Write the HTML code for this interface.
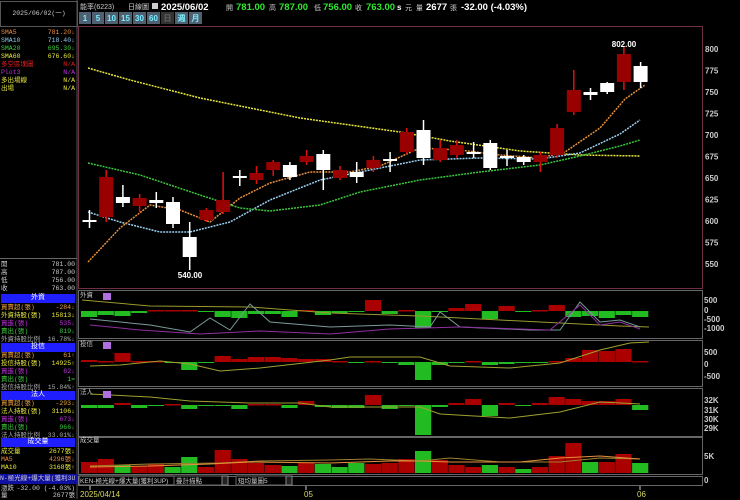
<!DOCTYPE html><html><head><meta charset="utf-8"><style>
body{margin:0;background:#000;width:740px;height:499px;overflow:hidden;font-family:"Liberation Mono","WenQuanYi Zen Hei",monospace;font-size:8px;color:#ccc}
#l{position:absolute;left:0;top:0;width:77px;height:499px}
.r{position:absolute;left:1px;width:75px;height:9px;line-height:9px;font-size:6.5px;white-space:nowrap;overflow:hidden}
.r span{position:absolute;right:1px;top:0}
.hd{position:absolute;left:1px;width:74px;height:9px;background:#1e1eff;color:#fff;text-align:center;line-height:9px;font-size:7px}
</style></head><body>
<svg width="740" height="499" style="position:absolute;left:0;top:0" id="s" font-family="Liberation Sans, WenQuanYi Zen Hei, sans-serif"></svg>
<div id="l">
<div style="position:absolute;left:0;top:1px;width:76px;height:24px;border:1px solid #555;color:#ccc;font-size:6.5px;line-height:24px;text-align:center">2025/06/02(一)</div>
<div class="r" style="top:28px;color:#e88a3c">SMA5<span>781.20↓</span></div>
<div class="r" style="top:36px;color:#8cc8e8">SMA10<span>718.40↓</span></div>
<div class="r" style="top:44px;color:#3cc83c">SMA20<span>695.30↓</span></div>
<div class="r" style="top:52px;color:#e8e83c">SMA60<span>676.60↓</span></div>
<div class="r" style="top:60px;color:#e02020">多空區塊圖<span>N/A</span></div>
<div class="r" style="top:68px;color:#c030e0">Plot3<span>N/A</span></div>
<div class="r" style="top:76px;color:#e8e83c">多出場線<span>N/A</span></div>
<div class="r" style="top:84px;color:#e8e83c">出場<span>N/A</span></div>
<div style="position:absolute;left:0;top:258px;width:77px;border-top:1px solid #666"></div>
<div class="r" style="top:260px">開<span>781.00</span></div>
<div class="r" style="top:268px">高<span>787.00</span></div>
<div class="r" style="top:276px">低<span>756.00</span></div>
<div class="r" style="top:284px">收<span>763.00</span></div>
<div class="hd" style="top:294px">外資</div>
<div class="r" style="top:303px;color:#e8a03c">買賣超(張)<span>-284↓</span></div>
<div class="r" style="top:311px;color:#e8e83c">外資持股(張)<span>15813↓</span></div>
<div class="r" style="top:319px;color:#c030e0">買進(張)<span>535↓</span></div>
<div class="r" style="top:327px;color:#3cc83c">賣出(張)<span>819↓</span></div>
<div class="r" style="top:335px;color:#aaa">外資持股比例<span>16.78%↓</span></div>
<div class="hd" style="top:343px">投信</div>
<div class="r" style="top:351px;color:#e8a03c">買賣超(張)<span>61↑</span></div>
<div class="r" style="top:359px;color:#e8e83c">投信持股(張)<span>14925↑</span></div>
<div class="r" style="top:367px;color:#c030e0">買進(張)<span>62↓</span></div>
<div class="r" style="top:375px;color:#3cc83c">賣出(張)<span>1=</span></div>
<div class="r" style="top:383px;color:#aaa">投信持股比例<span>15.84%↑</span></div>
<div class="hd" style="top:391px">法人</div>
<div class="r" style="top:399px;color:#e8a03c">買賣超(張)<span>-293↓</span></div>
<div class="r" style="top:407px;color:#e8e83c">法人持股(張)<span>31106↓</span></div>
<div class="r" style="top:415px;color:#c030e0">買進(張)<span>673↓</span></div>
<div class="r" style="top:423px;color:#3cc83c">賣出(張)<span>966↓</span></div>
<div class="r" style="top:431px;color:#aaa">法人持股比例<span>33.01%↓</span></div>
<div class="hd" style="top:438px">成交量</div>
<div class="r" style="top:447px;color:#e8e83c">成交量<span>2677張↓</span></div>
<div class="r" style="top:455px;color:#e88a3c">MA5<span>4296張↓</span></div>
<div class="r" style="top:463px;color:#e8e83c">MA10<span>3168張↑</span></div>
<div style="position:absolute;left:0;top:474px;width:77px;height:10px;background:#1010a0;color:#ccc;font-size:6.5px;line-height:10px;white-space:nowrap;overflow:hidden">N-極光線+爆大量(獲利3U</div>
<div class="r" style="top:484px">漲跌<span>-32.00 (-4.03%)</span></div>
<div class="r" style="top:491px">量<span>2677張</span></div>
</div>
<script>
var s=document.getElementById('s'),h='';
function R(x,y,w,hh,f,st){h+='<rect x="'+x+'" y="'+y+'" width="'+w+'" height="'+hh+'" fill="'+f+'"'+(st?' stroke="'+st+'"':'')+'/>'}
function L(x1,y1,x2,y2,c,w){h+='<line x1="'+x1+'" y1="'+y1+'" x2="'+x2+'" y2="'+y2+'" stroke="'+c+'" stroke-width="'+(w||1)+'"/>'}
function T(x,y,t,c,sz,a,b){h+='<text x="'+x+'" y="'+y+'" fill="'+c+'" font-size="'+sz+'"'+(a?' text-anchor="'+a+'"':'')+(b?' font-weight="bold"':'')+'>'+t+'</text>'}
function P(pts,c,w,d){h+='<polyline fill="none" stroke="'+c+'" stroke-width="'+(w||1)+'"'+(d?' stroke-dasharray="'+d+'"':'')+' points="'+pts+'"/>'}
L(77,0,77,499,'#555');
h+='<rect x="78.5" y="26.5" width="624" height="262" fill="none" stroke="#703048"/>';
T(80,9,'能率(6223)','#ccc',7);T(128,9,'日線圖','#ccc',7);R(152,3,6,6,'#ccc');
T(161,10,'2025/06/02','#fff',9.5,0,1);T(226,10,'開','#ccc',7);T(236,10,'781.00','#2ee82e',9.5,0,1);
T(269,10,'高','#ccc',7);T(279,10,'787.00','#2ee82e',9.5,0,1);T(314,10,'低','#ccc',7);T(323,10,'756.00','#2ee82e',9.5,0,1);
T(355,10,'收','#ccc',7);T(366,10,'763.00','#2ee82e',9.5,0,1);T(397,10,'s','#fff',8,0,1);T(405,10,'元','#ccc',7);T(416,10,'量','#ccc',7);T(426,10,'2677','#fff',9.5,0,1);T(450,10,'張','#ccc',7);T(461,10,'-32.00 (-4.03%)','#fff',9.5,0,1);
var bt=['1','5','10','15','30','60','日','週','月'],bx=79;
bt.forEach(function(b,i){var w=i<2?12:13;R(bx,12,w,12,i==6?'#333':'#506070');T(bx+w/2,21,b,i==6?'#666':'#7ef',8,'middle',1);bx+=w+1});
function py(p){return 49+(800-p)*0.86}
[800,775,750,725,700,675,650,625,600,575,550].forEach(function(p){T(705,py(p)+3,p,'#ccc',8,0,1)});
P('88,68 130,80 200,98 300,118 400,132 450,141 520,151 580,155 640,156','#e8e83c',1.5,'2,1');
P('88,212 120,222 160,232 190,232 230,222 270,200 320,180 370,170 420,160 480,158 540,159 580,153 620,134 640,120','#9ad0f0',1.5,'2,1');
P('88,163 140,175 200,195 240,208 270,211 320,205 360,192 420,180 480,172 540,165 580,156 620,146 640,140','#3cc83c',1.5,'2,1');
P('88,262 120,228 150,205 180,210 210,222 240,198 270,183 310,172 350,172 380,166 420,148 460,150 500,155 540,158 565,152 600,128 625,99 645,85','#e8903c',1.5,'2,1');
var C=[[0,220,222,210,228,'w'],[1,177,217,170,222,'r'],[2,197,203,185,207,'w'],[3,198,206,194,212,'r'],[4,200,203,192,208,'w'],[5,202,224,197,228,'w'],[6,237,257,222,270,'w'],[7,210,220,208,222,'r'],[8,200,212,172,214,'r'],[9,176,178,170,186,'w'],[10,173,180,166,184,'r'],[11,162,170,160,176,'r'],[12,165,177,162,180,'w'],[13,156,162,150,165,'r'],[14,154,170,150,190,'w'],[15,170,178,166,180,'r'],[16,172,177,162,183,'w'],[17,160,168,156,172,'r'],[18,159,161,152,172,'w'],[19,132,152,128,154,'r'],[20,130,158,120,165,'w'],[21,148,160,140,162,'r'],[22,145,155,140,158,'r'],[23,152,154,142,158,'w'],[24,143,168,140,170,'w'],[25,156,158,150,166,'w'],[26,157,162,155,165,'w'],[27,155,162,152,172,'r'],[28,128,155,124,158,'r'],[29,90,112,70,115,'r'],[30,92,95,88,100,'w'],[31,83,92,82,94,'w'],[32,54,82,47,90,'r'],[33,66,82,62,88,'w']];
C.forEach(function(c){var x=89.5+c[0]*16.7,col=c[5]=='r'?'#990000':'#fff',wc=c[5]=='r'?'#e01010':'#fff';L(x,c[3],x,c[4],wc,1.5);R(x-7,c[1],14,Math.max(c[2]-c[1],2),col);});
T(190,278,'540.00','#fff',8,'middle',1);T(624,47,'802.00','#fff',8,'middle',1);
[[290,338],[340,386],[388,436],[437,474]].forEach(function(p){h+='<rect x="78.5" y="'+p[0]+'.5" width="624" height="'+(p[1]-p[0])+'" fill="none" stroke="#666"/>'});
h+='<rect x="78.5" y="476.5" width="624" height="9" fill="none" stroke="#666"/>';
function bars(z,v,up){v.forEach(function(a,i){var x=81+i*16.7,c=a>=0?'#aa0000':'#22bb22';if(up){R(x,z-Math.abs(a),16.2,Math.abs(a),c)}else if(a>=0)R(x,z-a,16.2,Math.max(a,1.5),c);else R(x,z,16.2,-a,c)})}
bars(311,[-6,-4,-5,-2,1,1,1,-1,-6,-7,-3,-3,-6,1,-4,-2,-1,11,-3,1,-17,-1,3,7,-8,5,-1,1,6,-6,-5,-7,-4,-6]);
bars(362,[2,1,9,1,1,-1,-8,-1,6,3,5,5,4,3,3,1,-1,1,-1,-3,-18,-3,-1,1,-3,-2,-1,-1,1,4,12,11,13,1]);
bars(405,[-3,-3,2,-3,-1,1,-4,-1,-1,-4,1,1,-3,4,-2,-3,-3,10,-4,-1,-30,-2,2,6,-11,2,-1,2,8,6,4,4,6,-5]);
bars(473,[11,14,-8,7,9,-6,-16,6,23,14,10,8,-7,10,-9,-6,-10,9,10,14,-22,13,8,6,-8,6,-4,6,17,30,-11,11,19,-10],1);
P('82,300 150,306 250,307 330,313 420,316 500,320 560,323 620,326 649,327','#9a9a30',1);
P('90,319 150,325 190,332 210,318 230,330 250,304 270,322 330,327 390,325 430,327 440,312 460,327 530,330 560,330 580,302 600,322 620,320 640,327','#7a9a9a',1);
P('90,325 140,330 200,334 260,331 330,334 390,329 460,327 550,330 580,305 600,325 620,322 640,329','#9030a0',1);
P('90,366 120,365 160,361 190,364 220,371 260,368 330,360 350,357 420,357 450,366 510,368 560,363 600,350 630,343 649,342','#a0a030',1);
P('90,394 150,397 190,401 250,403 300,403 330,407 420,407 440,414 510,418 560,412 600,402 640,404','#a0a030',1);
P('90,466 150,464 220,463 260,461 330,460 370,459 420,461 450,458 500,462 560,462 600,458 640,459','#a08030',1);
P('90,467 150,466 210,464 250,462 330,463 390,461 420,461 450,462 520,462 560,458 600,456 640,459','#e8903c',1);
T(80,297,'外資','#ccc',6.5);R(103,293,8,7,'#b070e0');T(80,346,'投信','#ccc',6.5);R(103,342,8,7,'#b070e0');T(80,394,'法人','#ccc',6.5);R(103,391,8,7,'#b070e0');T(80,442,'成交量','#ccc',6.5);
[[300,'500'],[310,'0'],[319,'-500'],[328,'-1000'],[352,'500'],[364,'0'],[376,'-500'],[400,'32K'],[410,'31K'],[419,'30K'],[428,'29K'],[456,'5K'],[480,'0']].forEach(function(a){T(704,a[0]+3,a[1],'#ccc',8,0,1)});
R(79,476,95,9,'#000','#888');T(80,483,'KEN-極光線+爆大量(獲利3UP)','#ccc',6.5);
R(174,476,48,9,'#000','#666');T(176,483,'疊計描點','#ccc',6.5);R(222,476,6,9,'#222','#888');
R(236,476,50,9,'#000','#666');T(238,483,'短均量圖5','#ccc',6.5);R(286,476,6,9,'#222','#888');
L(90,486,90,490,'#ccc');L(306,486,306,490,'#ccc');L(640,486,640,490,'#ccc');
T(80,497,'2025/04/14','#d8d860',8);T(304,497,'05','#d8d860',8);T(637,497,'06','#d8d860',8);
s.innerHTML=h;
</script>
</body></html>
